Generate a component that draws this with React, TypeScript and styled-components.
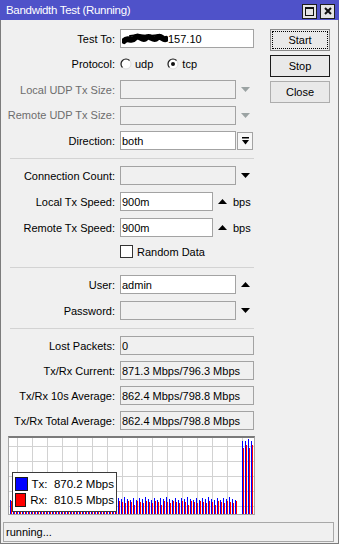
import React from "react";
import styled, { createGlobalStyle } from "styled-components";

const GlobalStyle = createGlobalStyle`
  html, body { margin: 0; padding: 0; background: #f0f0f0; }
  body { font-family: "Liberation Sans", Arial, sans-serif; font-size: 11px; color: #000; }
  * { box-sizing: border-box; }
`;

const Window = styled.div`
  width: 339px;
  height: 544px;
  display: flex;
  flex-direction: column;
  background: #f0f0f0;
  overflow: hidden;
`;

const TitleBar = styled.div`
  height: 20px;
  flex: none;
  background: #4f52c9;
  color: #fff;
  display: flex;
  align-items: center;
  justify-content: space-between;
  padding: 0 4px 0 6px;
`;

const TitleText = styled.div`
  font-size: 11.5px;
  letter-spacing: -0.3px;
`;

const TitleButtons = styled.div`
  display: flex;
  gap: 3px;
  padding-top: 2px;
`;

const TitleButton = styled.div`
  width: 15px;
  height: 15px;
  background: #e4e4e4;
  border: 1px solid #1e1e1e;
  display: flex;
  align-items: center;
  justify-content: center;
`;

const Frame = styled.div`
  flex: 1;
  display: flex;
  flex-direction: column;
  border: 1px solid #7c7c7c;
  border-top: none;
`;

const Body = styled.div`
  display: flex;
`;

const Form = styled.div`
  width: 262px;
  flex: none;
  display: flex;
  flex-direction: column;
  padding-top: 9px;
`;

const Section = styled.div<{ $gap: number }>`
  display: flex;
  flex-direction: column;
  gap: ${(p) => p.$gap}px;
`;

const Row = styled.div`
  display: flex;
  align-items: center;
  height: 19px;
`;

const Label = styled.div<{ $disabled?: boolean }>`
  width: 119px;
  flex: none;
  text-align: right;
  padding-right: 5px;
  white-space: nowrap;
  font-size: 11px;
  color: ${(p) => (p.$disabled ? "#6d6d6d" : "#000")};
`;

const TextBox = styled.div<{ $w: number; $variant?: "edit" | "readonly" }>`
  width: ${(p) => p.$w}px;
  height: 19px;
  flex: none;
  display: flex;
  align-items: center;
  padding-left: 1px;
  border: 1px solid #a3a3a3;
  background: ${(p) => (p.$variant === "edit" ? "#ffffff" : "#f0f0f0")};
  font-size: 11px;
  white-space: nowrap;
  overflow: hidden;
`;

const ArrowSlot = styled.div<{ $w: number; $ml?: number }>`
  width: ${(p) => p.$w}px;
  margin-left: ${(p) => p.$ml ?? 0}px;
  flex: none;
  display: flex;
  align-items: center;
  justify-content: center;
`;

const DropButton = styled.div`
  width: 16px;
  height: 18px;
  margin-left: 1px;
  flex: none;
  border: 1px solid #a3a3a3;
  background: #f7f7f7;
  display: flex;
  align-items: center;
  justify-content: center;
`;

const Unit = styled.span`
  margin-left: 6px;
  font-size: 11px;
`;

const RadioGroup = styled.div`
  display: flex;
  align-items: center;
  gap: 14px;
`;

const RadioItem = styled.div`
  display: flex;
  align-items: center;
  gap: 3px;
  font-size: 11px;
`;

const CheckRow = styled.div`
  display: flex;
  align-items: center;
  height: 15px;
  padding-left: 119px;
  gap: 4px;
  font-size: 11px;
`;

const CheckBox = styled.div`
  width: 13px;
  height: 13px;
  background: #fff;
  border: 1px solid #333;
`;

const Separator = styled.div`
  height: 1px;
  width: 244px;
  margin: 8px 0 7px 9px;
  background: #d3d3d3;
`;

const Actions = styled.div`
  display: flex;
  flex-direction: column;
  gap: 4px;
  padding-top: 9px;
  margin-left: 7px;
`;

const ActionButton = styled.div<{ $variant: "focus" | "default" | "plain" }>`
  width: 60px;
  height: 22px;
  position: relative;
  display: flex;
  align-items: center;
  justify-content: center;
  font-size: 11px;
  background: #e9e9e9;
  border: 1px solid
    ${(p) => (p.$variant === "default" ? "#1a1a1a" : p.$variant === "focus" ? "#8a8a8a" : "#adadad")};
  &::after {
    content: "";
    display: ${(p) => (p.$variant === "focus" ? "block" : "none")};
    position: absolute;
    inset: 1px;
    border: 1px dotted #000;
  }
`;

const ChartFrame = styled.div`
  position: relative;
  width: 247px;
  height: 79px;
  margin: 6px 0 0 7px;
  border: 1px solid #a6a6a6;
  border-top: 2px solid #7a7a7a;
  background: #fff;
`;

const Legend = styled.div`
  position: absolute;
  left: 3px;
  top: 34px;
  width: 105px;
  height: 40px;
  background: #fff;
  border: 1px solid #3c3c3c;
  padding: 4px 2px 3px;
  display: flex;
  flex-direction: column;
  gap: 2px;
`;

const LegendRow = styled.div`
  display: flex;
  align-items: center;
  gap: 4px;
  height: 14px;
  font-size: 11.5px;
  white-space: pre;
`;

const Swatch = styled.div<{ $color: string }>`
  width: 14px;
  height: 14px;
  background: ${(p) => p.$color};
  border: 1px solid #1a1a1a;
`;

const StatusBar = styled.div`
  height: 20px;
  margin: 7px 4px 0 2px;
  border: 1px solid #a8a8a8;
  display: flex;
  align-items: center;
  padding-left: 2px;
  font-size: 11px;
`;

const Tri = ({ dir, color = "#000" }: { dir: "up" | "down"; color?: string }) => (
  <svg width="9" height="5" viewBox="0 0 9 5">
    <path d={dir === "down" ? "M0 0H9L4.5 5Z" : "M0 5H9L4.5 0Z"} fill={color} />
  </svg>
);

const Radio = ({ checked }: { checked?: boolean }) => (
  <svg width="12" height="12" viewBox="0 0 12 12">
    <circle cx="6" cy="6" r="5" fill="#fff" stroke="#dcdcdc" strokeWidth="1" />
    <path d="M2.46 9.54 A5 5 0 0 1 9.54 2.46" fill="none" stroke="#222" strokeWidth="1.2" />
    {checked && <circle cx="6" cy="6" r="2" fill="#111" />}
  </svg>
);

const Scribble = () => (
  <svg width="46" height="12" viewBox="0 0 46 12">
    <path
      d="M2 8 C6 3, 9 10, 13 5 S 20 9, 24 5 S 31 9, 35 5 S 41 8, 44 6"
      fill="none"
      stroke="#000"
      strokeWidth="6"
      strokeLinecap="round"
    />
    <path d="M8 3 L16 2 L27 3 L38 2" fill="none" stroke="#000" strokeWidth="2" strokeLinecap="round" />
  </svg>
);

const lowBars = Array.from({ length: 76 }, (_, i) => {
  const a = (i * 37 + 11) % 7;
  const b = (i * 53 + 5) % 9;
  return { x: 1 + i * 3, blue: 14 + (a % 4), red: b === 0 ? 9 : 11 + (b % 3) };
});
const tallBars = [
  { x: 233, blue: 73, red: 66 },
  { x: 236, blue: 73, red: 69 },
  { x: 239, blue: 75, red: 66 },
  { x: 242, blue: 73, red: 69 },
];

const ChartDrawing = () => {
  const H = 76;
  const W = 245;
  const all = [...lowBars, ...tallBars];
  return (
    <svg width={W} height={H} viewBox={`0 0 ${W} ${H}`} style={{ display: "block" }}>
      {Array.from({ length: 16 }, (_, k) => (
        <line key={"v" + k} x1={8.5 + 15 * k} y1={0} x2={8.5 + 15 * k} y2={H} stroke="#d2d2d2" />
      ))}
      {Array.from({ length: 5 }, (_, k) => (
        <line key={"h" + k} x1={0} y1={8.5 + 15 * k} x2={W} y2={8.5 + 15 * k} stroke="#d2d2d2" />
      ))}
      {all.map((b, i) => (
        <g key={i}>
          <rect x={b.x} y={H - b.blue} width={1} height={b.blue} fill="#0000ff" />
          <rect x={b.x + 1} y={H - b.red} width={1} height={b.red} fill="#ff0000" />
        </g>
      ))}
    </svg>
  );
};

export default function App() {
  return (
    <>
      <GlobalStyle />
      <Window>
        <TitleBar>
          <TitleText>Bandwidth Test (Running)</TitleText>
          <TitleButtons>
            <TitleButton>
              <svg width="9" height="9" viewBox="0 0 9 9">
                <rect x="0.5" y="0.5" width="8" height="8" fill="none" stroke="#111" />
                <rect x="0" y="0" width="9" height="2" fill="#111" />
              </svg>
            </TitleButton>
            <TitleButton>
              <svg width="8" height="8" viewBox="0 0 8 8">
                <path d="M1 1L7 7M7 1L1 7" stroke="#111" strokeWidth="2" />
              </svg>
            </TitleButton>
          </TitleButtons>
        </TitleBar>
        <Frame>
          <Body>
            <Form>
              <Section $gap={6.5}>
                <Row>
                  <Label>Test To:</Label>
                  <TextBox $w={134} $variant="edit">
                    <Scribble />
                    157.10
                  </TextBox>
                </Row>
                <Row>
                  <Label>Protocol:</Label>
                  <RadioGroup>
                    <RadioItem>
                      <Radio />
                      udp
                    </RadioItem>
                    <RadioItem>
                      <Radio checked />
                      tcp
                    </RadioItem>
                  </RadioGroup>
                </Row>
                <Row>
                  <Label $disabled>Local UDP Tx Size:</Label>
                  <TextBox $w={116} />
                  <ArrowSlot $w={18}>
                    <Tri dir="down" color="#9ba3a3" />
                  </ArrowSlot>
                </Row>
                <Row>
                  <Label $disabled>Remote UDP Tx Size:</Label>
                  <TextBox $w={116} />
                  <ArrowSlot $w={18}>
                    <Tri dir="down" color="#9ba3a3" />
                  </ArrowSlot>
                </Row>
                <Row>
                  <Label>Direction:</Label>
                  <TextBox $w={116} $variant="edit">
                    both
                  </TextBox>
                  <DropButton>
                    <svg width="7" height="8" viewBox="0 0 7 8">
                      <rect x="0" y="0" width="7" height="1.5" fill="#000" />
                      <path d="M0 3H7L3.5 7.5Z" fill="#000" />
                    </svg>
                  </DropButton>
                </Row>
              </Section>
              <Separator />
              <Section $gap={7}>
                <Row>
                  <Label>Connection Count:</Label>
                  <TextBox $w={116} />
                  <ArrowSlot $w={18}>
                    <Tri dir="down" />
                  </ArrowSlot>
                </Row>
                <Row>
                  <Label>Local Tx Speed:</Label>
                  <TextBox $w={93} $variant="edit">
                    900m
                  </TextBox>
                  <ArrowSlot $w={10} $ml={4}>
                    <Tri dir="up" />
                  </ArrowSlot>
                  <Unit>bps</Unit>
                </Row>
                <Row>
                  <Label>Remote Tx Speed:</Label>
                  <TextBox $w={93} $variant="edit">
                    900m
                  </TextBox>
                  <ArrowSlot $w={10} $ml={4}>
                    <Tri dir="up" />
                  </ArrowSlot>
                  <Unit>bps</Unit>
                </Row>
                <CheckRow>
                  <CheckBox />
                  Random Data
                </CheckRow>
              </Section>
              <Separator />
              <Section $gap={7}>
                <Row>
                  <Label>User:</Label>
                  <TextBox $w={116} $variant="edit">
                    admin
                  </TextBox>
                  <ArrowSlot $w={18}>
                    <Tri dir="up" />
                  </ArrowSlot>
                </Row>
                <Row>
                  <Label>Password:</Label>
                  <TextBox $w={116} />
                  <ArrowSlot $w={18}>
                    <Tri dir="down" />
                  </ArrowSlot>
                </Row>
              </Section>
              <Separator />
              <Section $gap={6}>
                <Row>
                  <Label>Lost Packets:</Label>
                  <TextBox $w={134}>0</TextBox>
                </Row>
                <Row>
                  <Label>Tx/Rx Current:</Label>
                  <TextBox $w={134}>871.3 Mbps/796.3 Mbps</TextBox>
                </Row>
                <Row>
                  <Label>Tx/Rx 10s Average:</Label>
                  <TextBox $w={134}>862.4 Mbps/798.8 Mbps</TextBox>
                </Row>
                <Row>
                  <Label>Tx/Rx Total Average:</Label>
                  <TextBox $w={134}>862.4 Mbps/798.8 Mbps</TextBox>
                </Row>
              </Section>
              <ChartFrame>
                <ChartDrawing />
                <Legend>
                  <LegendRow>
                    <Swatch $color="#0000ff" />
                    {"Tx:  870.2 Mbps"}
                  </LegendRow>
                  <LegendRow>
                    <Swatch $color="#ff0000" />
                    {"Rx:  810.5 Mbps"}
                  </LegendRow>
                </Legend>
              </ChartFrame>
            </Form>
            <Actions>
              <ActionButton $variant="focus">Start</ActionButton>
              <ActionButton $variant="default">Stop</ActionButton>
              <ActionButton $variant="plain">Close</ActionButton>
            </Actions>
          </Body>
          <StatusBar>running...</StatusBar>
        </Frame>
      </Window>
    </>
  );
}
